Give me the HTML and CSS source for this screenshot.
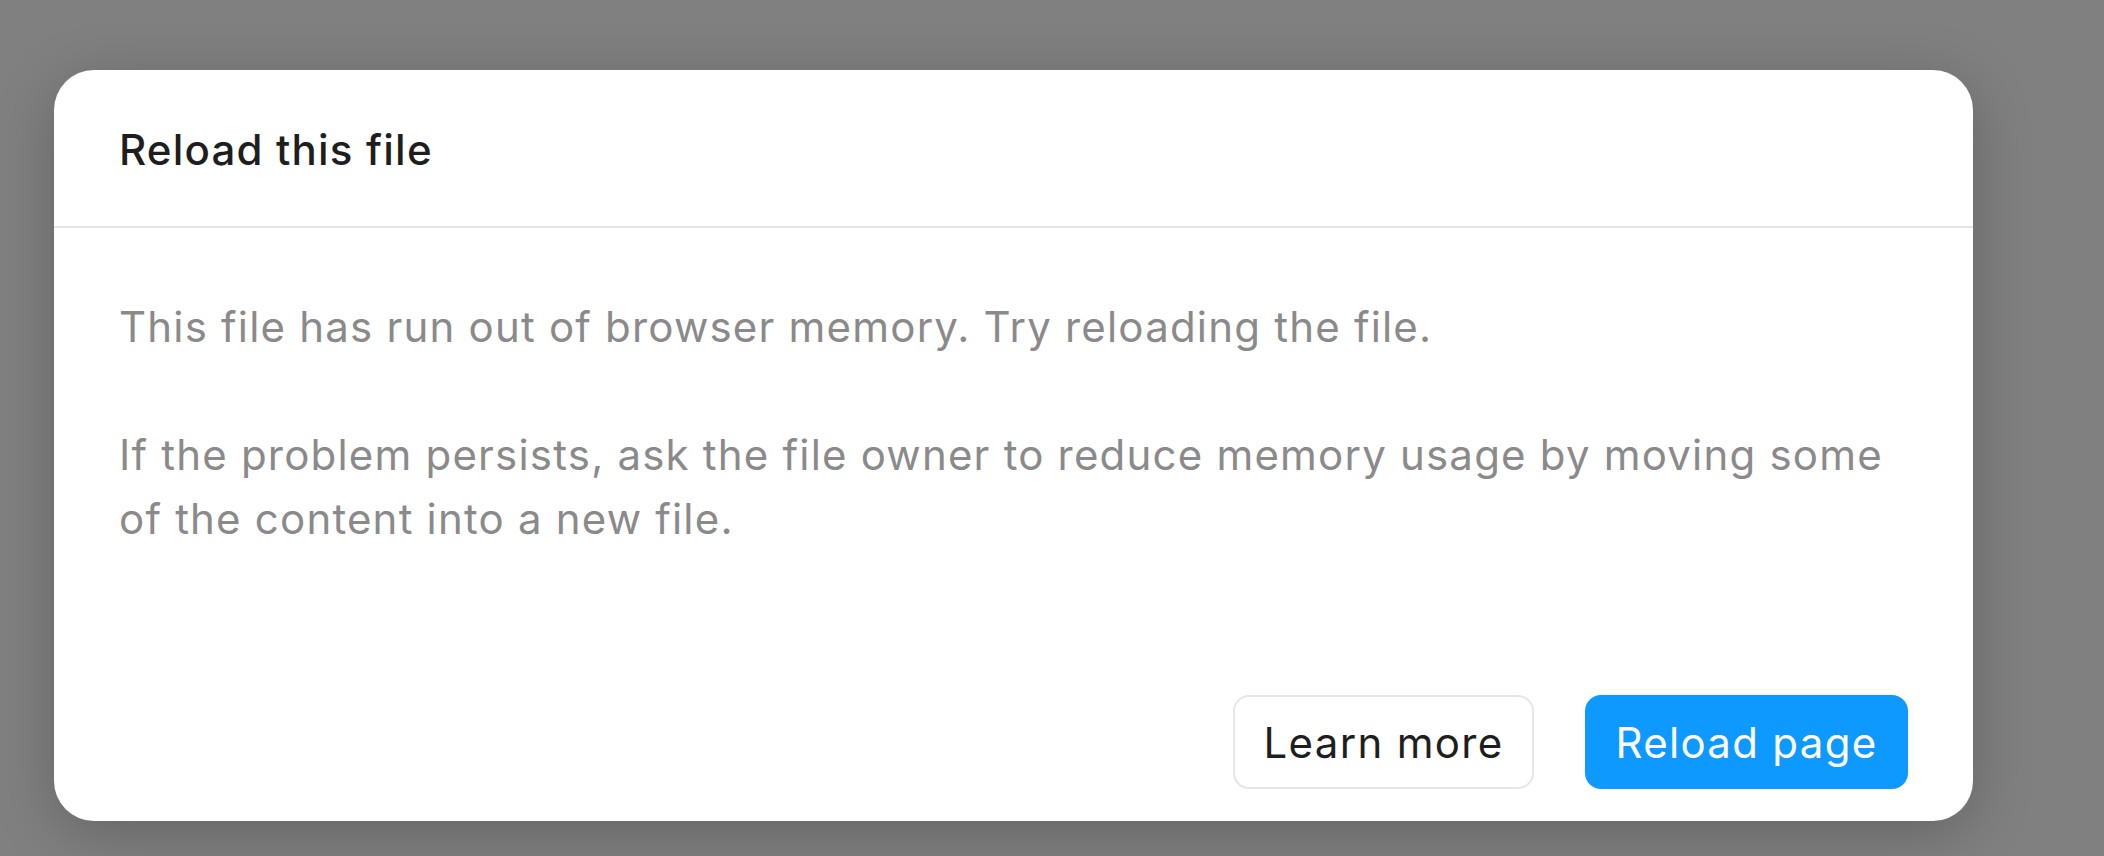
FILE: index.html
```html
<!DOCTYPE html>
<html>
<head>
<meta charset="utf-8">
<link rel="stylesheet" href="styles.css">
</head>
<body>
<div class="stage">
  <div class="dialog">
    <div class="header">
      <h1 class="title">Reload this file</h1>
    </div>
    <div class="body">
      <p class="text">This file has run out of browser memory. Try reloading the file.</p>
      <p class="text">If the problem persists, ask the file owner to reduce memory usage by moving some of the content into a new file.</p>
    </div>
    <div class="footer">
      <button class="btn btn-secondary">Learn more</button>
      <button class="btn btn-primary">Reload page</button>
    </div>
  </div>
</div>
</body>
</html>
```
FILE: styles.css
```css
* { box-sizing: border-box; }
html, body { margin: 0; padding: 0; }
body {
  background: #808080;
  width: 2104px;
  height: 856px;
  overflow: hidden;
  font-family: Inter, "Noto Sans", sans-serif;
}
.stage {
  padding: 70px 0 0 54px;
}
.dialog {
  width: 1919px;
  height: 751px;
  background: #ffffff;
  border-radius: 40px;
  box-shadow: 0 12px 60px rgba(0, 0, 0, 0.22);
  display: flex;
  flex-direction: column;
  overflow: hidden;
}
.header {
  height: 158px;
  padding: 2px 65px 0;
  display: flex;
  align-items: center;
  border-bottom: 2px solid #e6e6e6;
}
.title {
  margin: 0;
  font-size: 42px;
  font-weight: 500;
  letter-spacing: 1.2px;
  color: #1e1e1e;
}
.body {
  padding: 67px 65px 0;
  flex: 1;
}
.text {
  margin: 0 0 64px;
  font-size: 42px;
  line-height: 64px;
  letter-spacing: 1.2px;
  color: #8a8a8a;
}
.text:last-child { margin-bottom: 0; }
.footer {
  display: flex;
  justify-content: flex-end;
  gap: 51px;
  padding: 0 65px 32px;
}
.btn {
  height: 94px;
  border-radius: 16px;
  font-family: Inter, "Noto Sans", sans-serif;
  font-size: 42px;
  letter-spacing: 1.3px;
  padding: 0;
  cursor: pointer;
}
.btn-secondary {
  width: 301px;
  background: #ffffff;
  border: 2px solid #e6e6e6;
  color: #1e1e1e;
}
.btn-primary {
  width: 323px;
  background: #0d99ff;
  border: none;
  color: #ffffff;
}
```
